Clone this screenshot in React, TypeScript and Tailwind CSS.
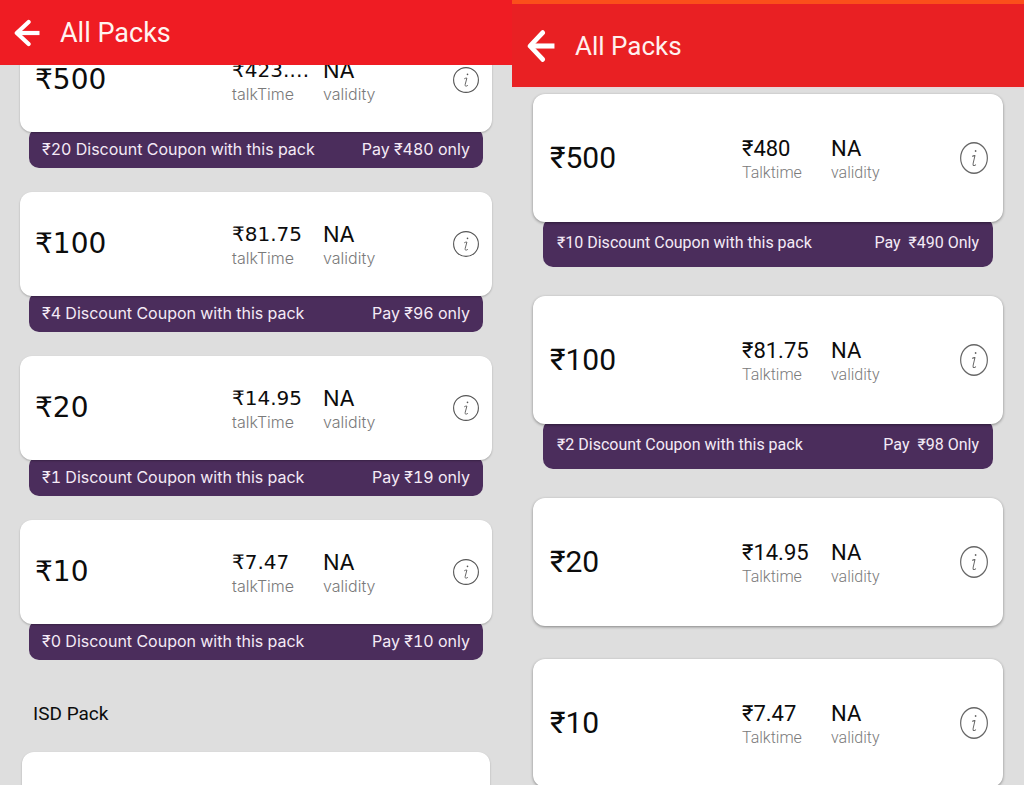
type Pack = {
  amount: string;
  talktime: string;
  coupon?: string;
  pay?: string;
};

const currentPacks: Pack[] = [
  { amount: '₹500', talktime: '₹423.…', coupon: '₹20 Discount Coupon with this pack', pay: 'Pay ₹480 only' },
  { amount: '₹100', talktime: '₹81.75', coupon: '₹4 Discount Coupon with this pack', pay: 'Pay ₹96 only' },
  { amount: '₹20', talktime: '₹14.95', coupon: '₹1 Discount Coupon with this pack', pay: 'Pay ₹19 only' },
  { amount: '₹10', talktime: '₹7.47', coupon: '₹0 Discount Coupon with this pack', pay: 'Pay ₹10 only' },
];

const otherPacks: Pack[] = [
  { amount: '₹500', talktime: '₹480', coupon: '₹10 Discount Coupon with this pack', pay: 'Pay  ₹490 Only' },
  { amount: '₹100', talktime: '₹81.75', coupon: '₹2 Discount Coupon with this pack', pay: 'Pay  ₹98 Only' },
  { amount: '₹20', talktime: '₹14.95' },
  { amount: '₹10', talktime: '₹7.47' },
];

function BackArrow({ className }: { className: string }) {
  return (
    <svg className={className} viewBox="0 0 26 28" preserveAspectRatio="none" fill="none" stroke="currentColor" strokeWidth="4.2" strokeLinejoin="round" aria-hidden="true">
      <path strokeLinecap="round" d="M14.6 3L2.8 14l11.8 11" />
      <path d="M3 14h22.5" />
    </svg>
  );
}

function InfoIcon({ className }: { className: string }) {
  return (
    <svg className={className} viewBox="0 0 26 26" preserveAspectRatio="none" fill="none" stroke="currentColor" aria-hidden="true">
      <circle cx="13" cy="13" r="12.4" strokeWidth="1.1" />
      <circle cx="14.5" cy="7.4" r="0.8" fill="currentColor" stroke="none" />
      <path strokeWidth="0.9" strokeLinecap="round" strokeLinejoin="round" d="M11.6 11.6c.8-.5 1.5-.6 2.3-.5l-1.7 6.3c-.3 1.3.1 1.8 1 1.7.5 0 .9-.2 1.3-.5" />
    </svg>
  );
}

function CompactPack({ pack }: { pack: Pack }) {
  return (
    <li>
      <div className="relative flex h-[104px] items-center rounded-xl bg-white pl-[15px] pr-[13px] shadow-[0_1px_2px_rgba(0,0,0,0.25)]">
        <h2 className="flex-1 font-['DejaVu_Sans',sans-serif] text-[28px] leading-8">{pack.amount}</h2>
        <dl className="flex pt-1">
          <div className="flex w-[91px] flex-col-reverse pr-3">
            <dt className="text-base leading-6 font-light text-[#7a7a7a]">talkTime</dt>
            <dd className="font-['DejaVu_Sans',sans-serif] text-xl leading-6">{pack.talktime}</dd>
          </div>
          <div className="flex w-[130px] flex-col-reverse">
            <dt className="text-base leading-6 font-light text-[#7a7a7a]">validity</dt>
            <dd className="text-[22px] leading-6">NA</dd>
          </div>
        </dl>
        <button type="button" aria-label="Pack details" className="text-[#555]">
          <InfoIcon className="size-[26px]" />
        </button>
      </div>
      <div className="mx-[9px] -mt-1 flex justify-between rounded-[10px] bg-[#4b2d5c] px-[13px] pt-[11px] pb-[9px] text-base leading-5 tabular-nums text-[#f4eaf6]">
        <span>{pack.coupon}</span>
        <span>{pack.pay}</span>
      </div>
    </li>
  );
}

function TallPack({ pack }: { pack: Pack }) {
  return (
    <li className={pack.coupon ? '' : 'pb-1'}>
      <div className="relative flex h-32 items-center rounded-xl bg-white pl-[17px] pr-[15px] shadow-[0_1px_3px_rgba(0,0,0,0.4)]">
        <h2 className="flex-1 text-[30px] leading-8">{pack.amount}</h2>
        <dl className="flex pt-1.5">
          <div className="flex w-[89px] flex-col-reverse">
            <dt className="text-base leading-6 font-light text-[#7a7a7a]">Talktime</dt>
            <dd className="text-[22px] leading-6">{pack.talktime}</dd>
          </div>
          <div className="flex w-[129px] flex-col-reverse">
            <dt className="text-base leading-6 font-light text-[#7a7a7a]">validity</dt>
            <dd className="text-[22px] leading-6">NA</dd>
          </div>
        </dl>
        <button type="button" aria-label="Pack details" className="text-[#666]">
          <InfoIcon className="h-8 w-7" />
        </button>
      </div>
      {pack.coupon && (
        <div className="mx-[10px] -mt-1 flex justify-between rounded-[10px] bg-[#4b2d5c] px-[14px] pt-[15px] pb-[14px] text-base leading-5 whitespace-pre text-[#f4eaf6]">
          <span>{pack.coupon}</span>
          <span>{pack.pay}</span>
        </div>
      )}
    </li>
  );
}

export default function App() {
  return (
    <div className="flex h-screen overflow-hidden bg-[#dedede] text-[#0c0c0c]">
      <section className="flex min-w-0 flex-1 flex-col font-['Inter',sans-serif]">
        <header className="relative z-10 flex h-[65px] shrink-0 items-center gap-5 bg-[#ef1c23] pl-[14px] font-['Roboto',sans-serif] text-[#fff4f0]">
          <button type="button" aria-label="Back" className="text-white">
            <BackArrow className="h-7 w-[26px]" />
          </button>
          <h1 className="text-[27px] leading-8">All Packs</h1>
        </header>
        <main className="min-h-0 flex-1 overflow-hidden px-5">
          <ul className="-mt-[37px] flex flex-col gap-6">
            {currentPacks.map((pack) => (
              <CompactPack key={pack.amount} pack={pack} />
            ))}
          </ul>
          <h2 className="mt-10 px-[13px] font-['Roboto',sans-serif] text-[19px] leading-7">ISD Pack</h2>
          <div className="mx-0.5 mt-6 h-[104px] rounded-xl bg-white shadow-[0_1px_2px_rgba(0,0,0,0.25)]" />
        </main>
      </section>

      <section className="flex min-w-0 flex-1 flex-col font-['Roboto',sans-serif]">
        <header className="flex h-[87px] shrink-0 items-center gap-5 border-t-4 border-[#fb4f1b] bg-[#e92023] pl-[15px] text-[#fff0ee]">
          <button type="button" aria-label="Back" className="text-white">
            <BackArrow className="h-[34px] w-7" />
          </button>
          <h1 className="text-[26px] leading-8">All Packs</h1>
        </header>
        <main className="min-h-0 flex-1 overflow-hidden border-t-2 border-[#e8d5d8] px-[21px] pt-[5px]">
          <ul className="flex flex-col gap-[29px]">
            {otherPacks.map((pack) => (
              <TallPack key={pack.amount} pack={pack} />
            ))}
          </ul>
        </main>
      </section>
    </div>
  );
}
